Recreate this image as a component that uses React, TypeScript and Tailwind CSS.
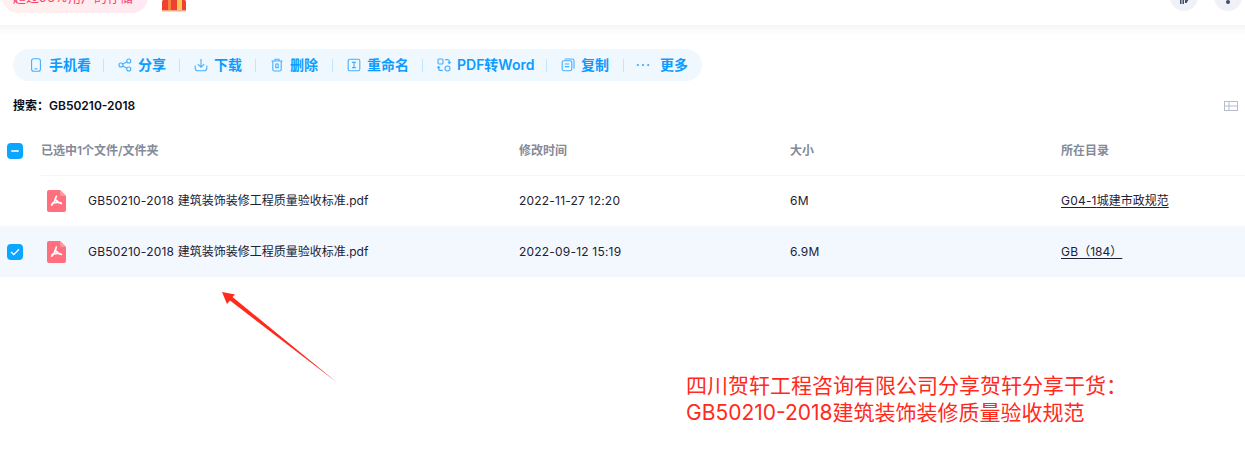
import type { ReactNode } from "react";

const blue = "#0d9bff";

const PhoneIcon = () => (
  <svg width="14" height="14" viewBox="0 0 14 14" fill="none" stroke="#45aeff" strokeWidth="1.1">
    <rect x="2.6" y="0.8" width="8.8" height="12.4" rx="2" />
    <path d="M5.5 10.8h3" />
  </svg>
);
const ShareIcon = () => (
  <svg width="14" height="14" viewBox="0 0 14 14" fill="none" stroke="#45aeff" strokeWidth="1.1">
    <circle cx="3" cy="7" r="2" />
    <circle cx="10.8" cy="3" r="2" />
    <circle cx="10.8" cy="11" r="2" />
    <path d="M4.8 6l4.2-2.2M4.8 8l4.2 2.2" />
  </svg>
);
const DownloadIcon = () => (
  <svg width="14" height="14" viewBox="0 0 14 14" fill="none" stroke="#45aeff" strokeWidth="1.1">
    <path d="M7 1v8M3.800 6.200L7 9.200l3.200-3M1.200 7.500v2.800a2.400 2.400 0 0 0 2.400 2.400h6.800a2.400 2.400 0 0 0 2.400-2.400V7.500" />
  </svg>
);
const TrashIcon = () => (
  <svg width="14" height="14" viewBox="0 0 14 14" fill="none" stroke="#45aeff" strokeWidth="1.1">
    <path d="M1.500 3h11M5 3V1.200h4V3M2.800 3v8.400a1.600 1.600 0 0 0 1.600 1.600h5.200a1.600 1.600 0 0 0 1.600-1.600V3M5.800 6v3.600h2.400V6z" />
  </svg>
);
const RenameIcon = () => (
  <svg width="14" height="14" viewBox="0 0 14 14" fill="none" stroke="#45aeff" strokeWidth="1.1">
    <rect x="1.200" y="1.200" width="11.600" height="11.600" rx="1.600" />
    <path d="M5 4.400h4M7 4.400v5.200M5 9.600h4" />
  </svg>
);
const ConvertIcon = () => (
  <svg width="14" height="14" viewBox="0 0 14 14" fill="none" stroke="#45aeff" strokeWidth="1.1">
    <rect x="1" y="1" width="5" height="5" rx="1" />
    <circle cx="10.500" cy="10.500" r="2.500" />
    <path d="M8.200 1.600h2.200a2 2 0 0 1 2 2v1.600M11 4l1.400 1.400L13.600 4M5.800 12.400H3.600a2 2 0 0 1-2-2V8.800M3 10L1.600 8.600.4 10" />
  </svg>
);
const CopyIcon = () => (
  <svg width="14" height="14" viewBox="0 0 14 14" fill="none" stroke="#45aeff" strokeWidth="1.1">
    <rect x="1.200" y="2.800" width="9.600" height="10" rx="1.800" />
    <path d="M3.600 1h7.600a1.800 1.800 0 0 1 1.800 1.800v7.600M3.800 6h4.400M3.800 8.600h4.400" />
  </svg>
);
const DotsIcon = () => (
  <svg width="14" height="14" viewBox="0 0 14 14" fill="#3aa8ff">
    <circle cx="1.800" cy="7" r="1.100" />
    <circle cx="7" cy="7" r="1.100" />
    <circle cx="12.200" cy="7" r="1.100" />
  </svg>
);

const PdfIcon = () => (
  <svg width="19" height="22" viewBox="0 0 19 22">
    <path d="M2 0h11l6 6v14a2 2 0 0 1-2 2H2a2 2 0 0 1-2-2V2a2 2 0 0 1 2-2z" fill="#ff6f7d" />
    <path d="M13 0l6 6h-4a2 2 0 0 1-2-2z" fill="#ff97a1" />
    <path
      d="M9.300 6.200c-.5 2.800-2 6.300-4.600 9M9.300 10.300c1 1.500 2.600 2.700 5 3.200M5.200 13.600c2.500-1.300 5.500-1.500 8.800-.6"
      fill="none"
      stroke="#fff"
      strokeWidth="1.700"
      strokeLinecap="round"
    />
  </svg>
);

const GiftIcon = () => (
  <svg width="24" height="12" viewBox="0 0 24 12">
    <rect x="0" y="0" width="24" height="11" rx="1.500" fill="#ee4033" />
    <rect x="6" y="0" width="3" height="11" fill="#f8813f" />
    <rect x="15" y="0" width="5" height="11" fill="#fbc94f" />
    <rect x="0" y="10" width="24" height="1.500" fill="#f6a98a" />
  </svg>
);

const actions: { icon: ReactNode; label: string; w: string }[] = [
  { icon: <PhoneIcon />, label: "手机看", w: "w-[89px]" },
  { icon: <ShareIcon />, label: "分享", w: "w-[76px]" },
  { icon: <DownloadIcon />, label: "下载", w: "w-[76px]" },
  { icon: <TrashIcon />, label: "删除", w: "w-[77px]" },
  { icon: <RenameIcon />, label: "重命名", w: "w-[90px]" },
  { icon: <ConvertIcon />, label: "PDF转Word", w: "w-[124px]" },
  { icon: <CopyIcon />, label: "复制", w: "w-[75px]" },
  { icon: <DotsIcon />, label: "更多", w: "" },
];

const files = [
  { time: "2022-11-27 12:20", size: "6M", dirHead: "G04-1", dirTail: "城建市政规范", checked: false },
  { time: "2022-09-12 15:19", size: "6.9M", dirHead: "GB", dirTail: "（184）", checked: true },
];

export default function App() {
  return (
    <div
      className="relative h-[464px] w-[1245px] overflow-hidden bg-white text-[#1c2133]"
      style={{ fontFamily: 'Inter, "Noto Sans CJK SC", sans-serif' }}
    >
      {/* top bar, cut off by the crop */}
      <div className="flex h-[25px] items-start justify-between pl-[2px] pr-[3px]">
        <div className="flex items-start">
          <div className="mt-[-20px] flex h-[33px] w-[146px] items-end rounded-[16px] bg-gradient-to-r from-[#fff1ed] to-[#ffe9f2] pb-[8px] pl-[11px] text-[13px] leading-[16px] text-[#f9416e]">
            超过96%用户的存储
          </div>
          <div className="ml-[14px]">
            <GiftIcon />
          </div>
        </div>
        <div className="flex gap-[16px]">
          <div className="mt-[-17px] flex h-[28px] w-[28px] items-end justify-center rounded-full bg-[#f0f1f7] pb-[7px]">
            <svg width="10" height="5" viewBox="0 0 10 5" fill="#3f4c6e">
              <rect x="1" y="0" width="1.500" height="5" />
              <rect x="3.500" y="0" width="1.500" height="5" />
              <path d="M6 0h4L7.500 4H6z" />
            </svg>
          </div>
          <div className="mt-[-17px] flex h-[28px] w-[28px] items-end justify-center rounded-full bg-[#f0f1f7] pb-[7px]">
            <div className="h-[4px] w-[4px] rounded-full bg-[#3f4c6e]" />
          </div>
        </div>
      </div>
      <div className="h-[10px] bg-gradient-to-b from-[#f5f5f5] to-white" />

      {/* toolbar */}
      <div className="ml-[13px] mt-[14px] flex h-[32px] w-[689px] items-center rounded-[16px] bg-[#eff8ff] pl-[16px]">
        {actions.map((a, i) => (
          <div key={a.label} className={`flex items-center ${a.w}`}>
            <div className={`flex shrink-0 ${i === 7 ? "w-[24px]" : "w-[20px]"}`}>{a.icon}</div>
            <span className="text-[14px] font-semibold leading-[16px]" style={{ color: blue }}>
              {a.label}
            </span>
            {i < actions.length - 1 && (
              <div className={`ml-auto h-[13px] w-px bg-[#c5e5fd] ${i === 6 ? "mr-[12px]" : "mr-[14px]"}`} />
            )}
          </div>
        ))}
      </div>

      {/* search line */}
      <div className="ml-[13px] mr-[7px] mt-[17px] flex h-[16px] items-center justify-between">
        <div className="text-[12px] font-semibold leading-[16px] text-[#0a0d1a]">搜索：GB50210-2018</div>
        <svg width="14" height="10" viewBox="0 0 14 10" fill="none" stroke="#b6bcc9" strokeWidth="1">
          <rect x="0.500" y="0.500" width="13" height="9" />
          <path d="M5 0.500v9M0.500 5h13" />
        </svg>
      </div>

      {/* file table */}
      <div className="mt-[16px]">
        <div className="grid h-[45px] grid-cols-[41px_478px_271px_271px_1fr] items-center pb-[4px] text-[12px] font-semibold text-[#858a99]">
          <div className="pl-[7px]">
            <div className="flex h-4 w-4 items-center justify-center rounded-[4px] bg-[#0ba6ff]">
              <div className="h-[2px] w-[8px] rounded-full bg-white/80" />
            </div>
          </div>
          <div>已选中1个文件/文件夹</div>
          <div>修改时间</div>
          <div>大小</div>
          <div>所在目录</div>
        </div>
        <div className="ml-[41px] h-px bg-[#f5f6f8]" />
        {files.map((f) => (
          <div
            key={f.time}
            className={`grid grid-cols-[41px_478px_271px_271px_1fr] items-center text-[12px] ${
              f.checked ? "h-[51px] bg-[#f2f8fe]" : "h-[50px]"
            }`}
          >
            <div className="pl-[7px]">
              {f.checked && (
                <div className="flex h-4 w-4 items-center justify-center rounded-[4px] bg-[#0ba6ff]">
                  <svg width="10" height="8" viewBox="0 0 10 8" fill="none" stroke="#fff" strokeWidth="1.300">
                    <path d="M1 4l2.800 2.600L9 1.200" />
                  </svg>
                </div>
              )}
            </div>
            <div className="flex items-center pl-[6px]">
              <PdfIcon />
              <span className="ml-[22px] whitespace-pre">
                <span className="tracking-[0.2px]">GB50210-2018 </span>建筑装饰装修工程质量验收标准.pdf
              </span>
            </div>
            <div className="tracking-[0.2px]">{f.time}</div>
            <div className="tracking-[0.2px]">{f.size}</div>
            <div>
              <span className="underline underline-offset-2">
                <span className="tracking-[0.2px]">{f.dirHead}</span>
                {f.dirTail}
              </span>
            </div>
          </div>
        ))}
      </div>

      {/* annotation laid over the screenshot */}
      <svg className="absolute left-[215px] top-[285px]" width="130" height="105" viewBox="0 0 130 105">
        <path d="M7 7L20 9.500 17.500 12 122 97.500 15 15.500 12 19z" fill="#ff2a1c" />
      </svg>
      <div className="absolute left-[686px] top-[372px] text-[21px] leading-[27px] text-[#ff2a1c]">
        <div>四川贺轩工程咨询有限公司分享贺轩分享干货：</div>
        <div>GB50210-2018建筑装饰装修质量验收规范</div>
      </div>
    </div>
  );
}
